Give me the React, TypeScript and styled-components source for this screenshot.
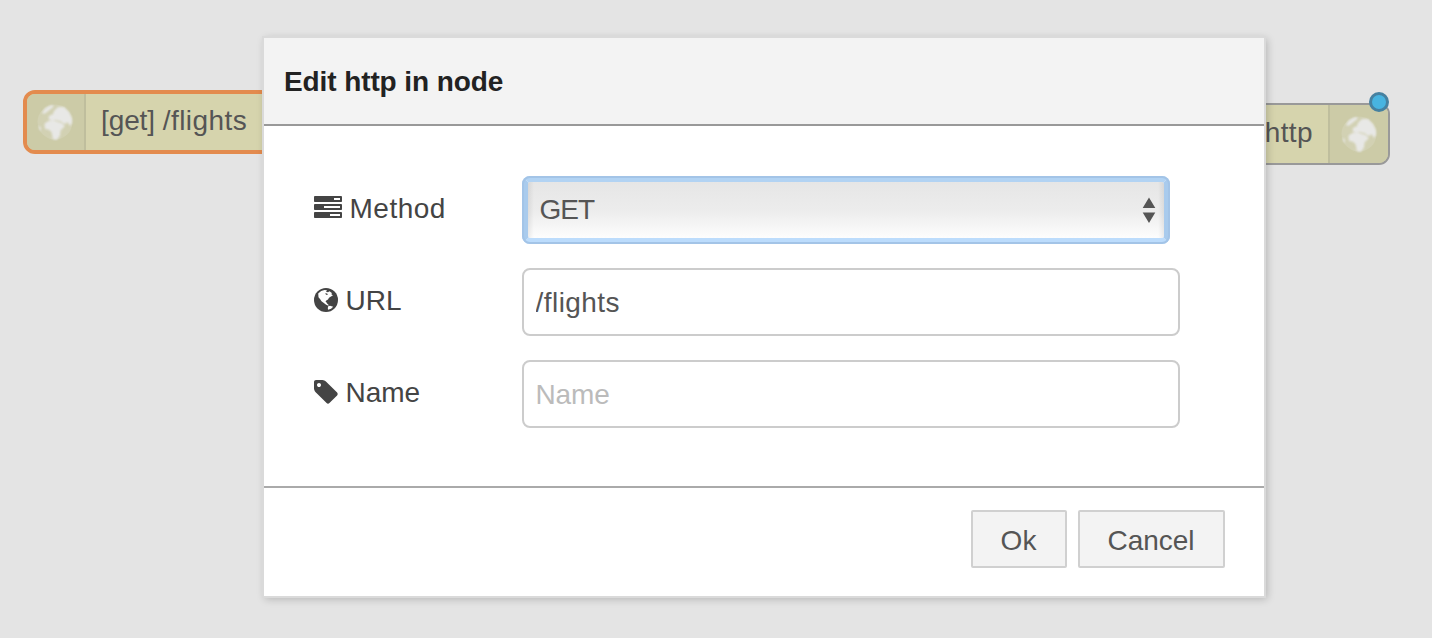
import React from 'react';
import styled, { createGlobalStyle } from 'styled-components';

const GlobalStyle = createGlobalStyle`
  * { box-sizing: border-box; }
  body {
    margin: 0;
    background: #e4e4e4;
    font-family: "Liberation Sans", Arial, sans-serif;
    font-size: 28px;
    color: #444;
    overflow: hidden;
  }
`;

const Workspace = styled.main`
  position: relative;
  height: 638px;
  padding: 38px 0 0 264px;
  background: #e4e4e4;
  overflow: hidden;
`;

const FlowNode = styled.div<{ $x: number; $y: number; $w: number; $h: number; $selected?: boolean }>`
  position: absolute;
  left: ${p => p.$x}px;
  top: ${p => p.$y}px;
  width: ${p => p.$w}px;
  height: ${p => p.$h}px;
  display: flex;
  border: ${p => (p.$selected ? '4px solid #e38b4e' : '2px solid #999')};
  border-radius: ${p => (p.$selected ? 12 : 11)}px;
  background: #d6d4ad;
  color: #555;
`;

const NodeIcon = styled.div<{ $side: 'left' | 'right' }>`
  width: ${p => (p.$side === 'left' ? 59 : 60)}px;
  flex: none;
  display: flex;
  align-items: center;
  justify-content: center;
  padding: 0 1px 1px 0;
  background: #cccba7;
  border-${p => (p.$side === 'left' ? 'right' : 'left')}: 2px solid #bfbe9d;
  border-radius: ${p => (p.$side === 'left' ? '8px 0 0 8px' : '0 9px 9px 0')};
`;

const NodeLabel = styled.div<{ $align: 'left' | 'right'; $spacing: number; $line: number }>`
  flex: 1;
  padding: 0 15px;
  line-height: ${p => p.$line}px;
  text-align: ${p => p.$align};
  white-space: nowrap;
  letter-spacing: ${p => p.$spacing}px;
`;

const NodePath = styled.span`
  letter-spacing: 0.45px;
`;

const ChangedDot = styled.span`
  position: absolute;
  top: -13px;
  right: -1px;
  width: 20px;
  height: 20px;
  border: 3px solid #4681a0;
  border-radius: 50%;
  background: #48b4e0;
`;

const Dialog = styled.section`
  position: relative;
  width: 1000px;
  height: 558px;
  display: flex;
  flex-direction: column;
  background: #fff;
  box-shadow: 0 0 0 2px #dadada, 2px 2px 8px 1px rgba(0, 0, 0, 0.22);
`;

const DialogHeader = styled.header`
  height: 88px;
  padding: 0 20px;
  background: #f3f3f3;
  border-bottom: 2px solid #999;
`;

const Title = styled.h1`
  margin: 0;
  font-size: 28px;
  line-height: 87px;
  font-weight: 700;
  letter-spacing: -0.1px;
  color: #222;
`;

const Form = styled.form`
  flex: 1;
  display: flex;
  flex-direction: column;
  gap: 24px;
  padding: 50px 50px 0;
`;

const Row = styled.div`
  display: flex;
  height: 68px;
`;

const Label = styled.label<{ $spacing?: number }>`
  width: 208px;
  display: flex;
  align-items: center;
  gap: 7.5px;
  height: 64px;
  letter-spacing: ${p => p.$spacing ?? 0}px;

  svg { flex: none; }
  span { padding-top: 2px; }
`;

const TextInput = styled.input`
  width: 658px;
  height: 68px;
  padding: 2px 12px 0 11.5px;
  border: 2px solid #ccc;
  border-radius: 8px;
  background: #fff;
  color: #555;
  font: inherit;
  letter-spacing: 0.45px;
  outline: none;

  &::placeholder { color: #bbb; opacity: 1; letter-spacing: -0.1px; }
`;

const SelectBox = styled.div`
  width: 648px;
  height: 68px;
  display: flex;
  align-items: center;
  justify-content: space-between;
  padding: 0 8px 1px 11.5px;
  border: 6px solid;
  border-color: #b2d3f3 #a9cbed #bcdcfc #a9cbed;
  border-radius: 8px;
  outline: 2px solid #a3c4e7;
  outline-offset: -2px;
  background: linear-gradient(90deg, #00000012, transparent 6px, transparent calc(100% - 6px), #00000012) padding-box,
    linear-gradient(#e6e6e6, #ececec 50%, #fdfdfd) padding-box;
  color: #555;
  letter-spacing: -1px;
`;

const DialogFooter = styled.footer`
  height: 110px;
  display: flex;
  justify-content: flex-end;
  align-items: flex-start;
  gap: 11px;
  padding: 22px 39px 0;
  border-top: 2px solid #aaa;
`;

const Button = styled.button<{ $w: number }>`
  width: ${p => p.$w}px;
  height: 58px;
  padding: 3px 1px 0 0;
  border: 2px solid #d0d0d0;
  border-radius: 2px;
  background: #f3f3f3;
  color: #555;
  font: inherit;
`;

const EarthLand = styled.g`
  filter: blur(0.8px);
`;

const EarthIcon = () => (
  <svg width="38" height="38" viewBox="0 0 38 38">
    <circle cx="19" cy="19" r="17.5" fill="#e7e7df" opacity=".22" />
    <EarthLand fill="#e8e8e6">
      <path d="M8.500 20.500l5-3 6 .5 6 2 3.500 3-4.500 4.500-.5 5-3.500 4.500-3.500-1-1.500-7-3-2.500-3.500-.5z" />
      <path d="M12.500 16l.5-3 4-2 1-3 4-4 6 0 5 5 3 6 0 5-2 3-2.500-4-2 2-3-1-1-1.500-6-1.500-3 1z" />
      <path d="M6 10l3-4.500 4-2.500 4-1 .5 2-3.500 2.500-3 2.500-3 2z" />
      <path d="M2.500 23l2.500 1 0 4-1.500-1zM12 34.500l6 1 7-1.500-6 2.500z" opacity=".8" />
    </EarthLand>
  </svg>
);

const TasksIcon = () => (
  <svg width="28" height="28" viewBox="0 0 1792 1792" fill="#444">
    <path d="M1024 1408h640v-128h-640v128zm-384-512h1024v-128h-1024v128zm640-512h384v-128h-384v128zm512 832v256q0 26-19 45t-45 19h-1664q-26 0-45-19t-19-45v-256q0-26 19-45t45-19h1664q26 0 45 19t19 45zm0-512v256q0 26-19 45t-45 19h-1664q-26 0-45-19t-19-45v-256q0-26 19-45t45-19h1664q26 0 45 19t19 45zm0-512v256q0 26-19 45t-45 19h-1664q-26 0-45-19t-19-45v-256q0-26 19-45t45-19h1664q26 0 45 19t19 45z" />
  </svg>
);

const GlobeIcon = () => (
  <svg width="24" height="24" viewBox="0 0 24 24">
    <circle cx="12" cy="12" r="12" fill="#444" />
    <g fill="#fff">
      <path d="M4.200 5.500Q7 2.300 10.500 2L13 2.200 12 3.700 14 4.200 15.500 3.200 17.800 5 17.500 6.500 19 7.300 17 8.600 15 9.800 14 11.500 12.300 12.500 11.500 13.200 12.500 14.400 13.300 15.800 15 17.200 13.700 17.600 11.800 16.600 9.500 14.800 7.500 13.300 6 11 4.500 9.300z" />
      <path d="M14.200 18.200L16 17.800 19.200 18.700Q17.500 21 14 21.800L13.800 20z" />
    </g>
    <path d="M11.200 5.200L13.200 5.500 13.800 7 12 6.800z" fill="#444" />
  </svg>
);

const TagIcon = () => (
  <svg width="24" height="28" viewBox="128 0 1536 1792" fill="#444">
    <path d="M576 448q0-53-37.500-90.500t-90.500-37.500-90.500 37.500-37.500 90.500 37.500 90.500 90.500 37.500 90.500-37.500 37.500-90.500zm1067 576q0 53-37 90l-491 492q-39 37-91 37-53 0-90-37l-715-716q-38-37-64.500-101t-26.500-117v-416q0-52 38-90t90-38h416q53 0 117 26.500t102 64.500l715 714q37 39 37 91z" />
  </svg>
);

const SelectArrows = () => (
  <svg width="14" height="26" viewBox="0 0 14 26" fill="#555">
    <path d="M7 0.5L13.3 11H.7zM.7 15.500h12.600L7 26z" />
  </svg>
);

export default function App() {
  return (
    <>
      <GlobalStyle />
      <Workspace>
        <FlowNode $x={23} $y={90} $w={300} $h={64} $selected>
          <NodeIcon $side="left"><EarthIcon /></NodeIcon>
          <NodeLabel $align="left" $spacing={-0.1} $line={53}>[get] <NodePath>/flights</NodePath></NodeLabel>
        </FlowNode>
        <FlowNode $x={1200} $y={103} $w={190} $h={62}>
          <NodeLabel $align="right" $spacing={0.4} $line={55}>http</NodeLabel>
          <NodeIcon $side="right"><EarthIcon /></NodeIcon>
          <ChangedDot />
        </FlowNode>
        <Dialog>
          <DialogHeader><Title>Edit http in node</Title></DialogHeader>
          <Form>
            <Row>
              <Label $spacing={0.5}><TasksIcon /><span>Method</span></Label>
              <SelectBox><span>GET</span><SelectArrows /></SelectBox>
            </Row>
            <Row>
              <Label><GlobeIcon /><span>URL</span></Label>
              <TextInput defaultValue="/flights" />
            </Row>
            <Row>
              <Label><TagIcon /><span>Name</span></Label>
              <TextInput placeholder="Name" />
            </Row>
          </Form>
          <DialogFooter>
            <Button type="button" $w={96}>Ok</Button>
            <Button type="button" $w={147}>Cancel</Button>
          </DialogFooter>
        </Dialog>
      </Workspace>
    </>
  );
}
